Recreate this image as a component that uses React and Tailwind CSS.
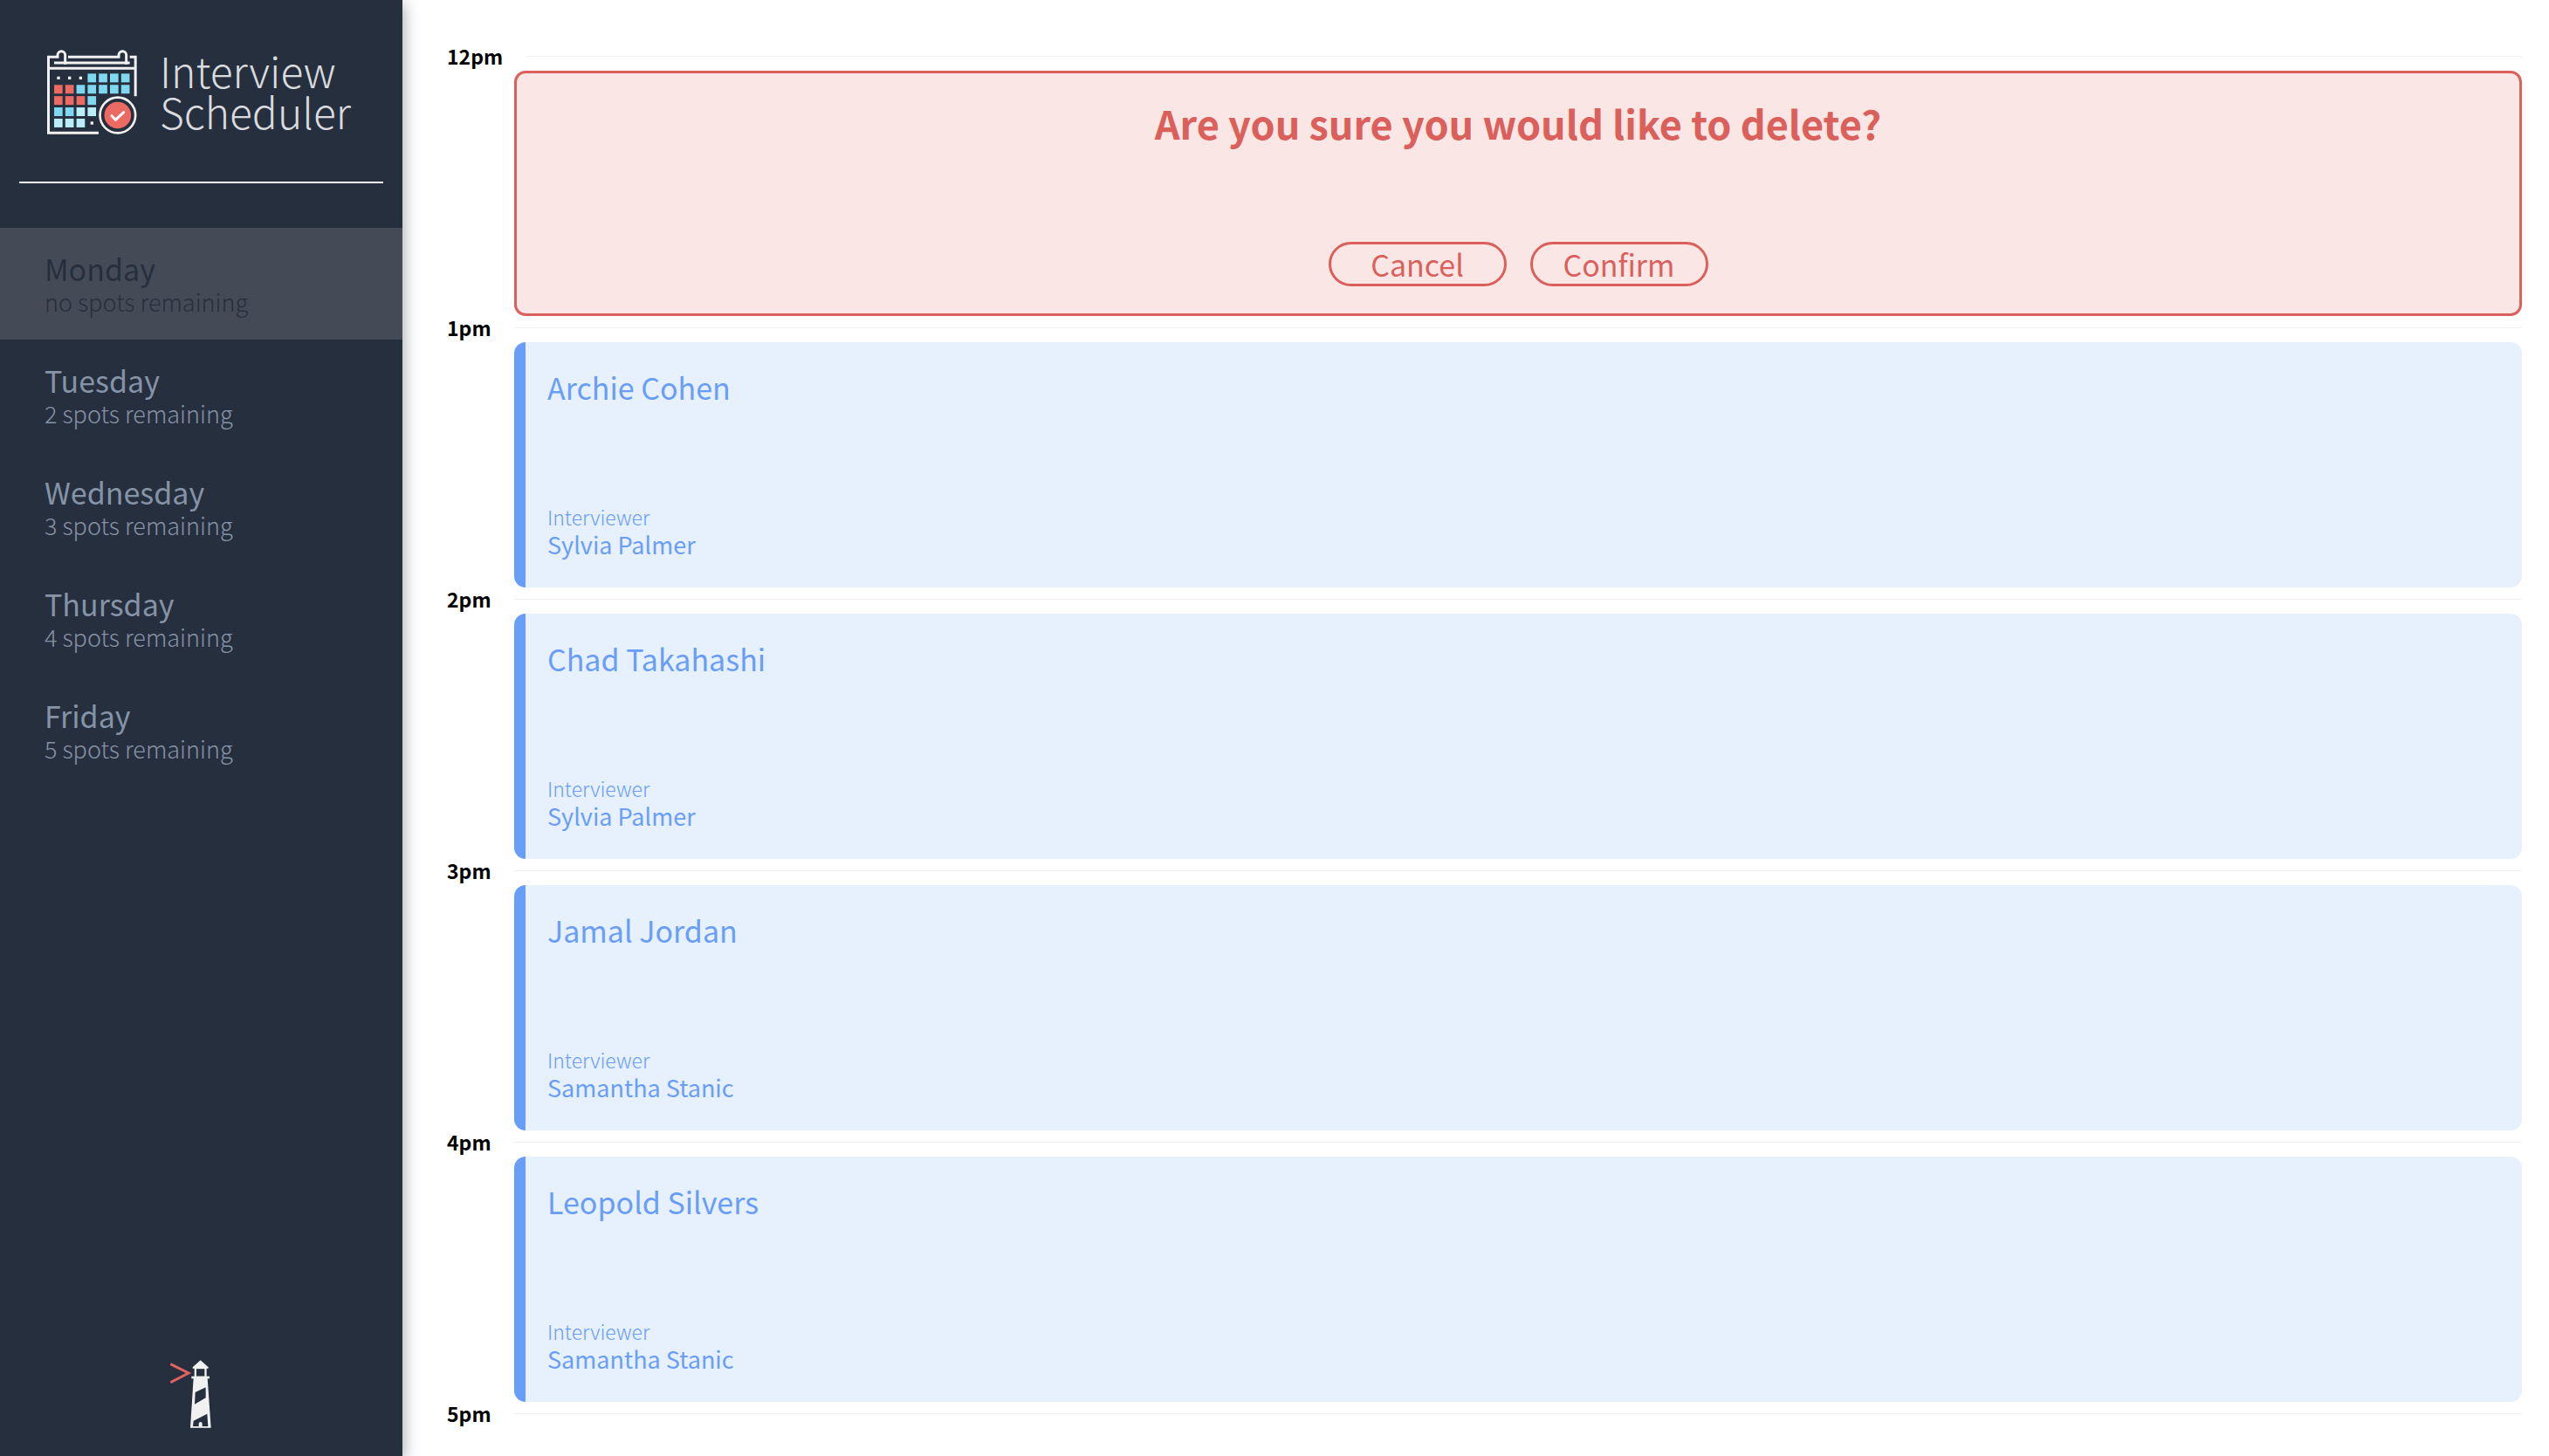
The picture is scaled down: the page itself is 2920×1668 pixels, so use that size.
const DAYS = [
  { name: "Monday", spots: "no spots remaining", full: true },
  { name: "Tuesday", spots: "2 spots remaining" },
  { name: "Wednesday", spots: "3 spots remaining" },
  { name: "Thursday", spots: "4 spots remaining" },
  { name: "Friday", spots: "5 spots remaining" },
];

const APPOINTMENTS = [
  { time: "12pm", confirm: "Are you sure you would like to delete?" },
  { time: "1pm", student: "Archie Cohen", interviewer: "Sylvia Palmer" },
  { time: "2pm", student: "Chad Takahashi", interviewer: "Sylvia Palmer" },
  { time: "3pm", student: "Jamal Jordan", interviewer: "Samantha Stanic" },
  { time: "4pm", student: "Leopold Silvers", interviewer: "Samantha Stanic" },
  { time: "5pm" },
];

const BLUE = "#7fd8ef";
const PALE = "#b9eef9";
const RED = "#ec6a62";

// [column, row, colour] of every filled day in the calendar
const CELLS = [
  [3, 0, BLUE], [4, 0, BLUE], [5, 0, BLUE], [6, 0, BLUE],
  [0, 1, RED], [1, 1, RED], [2, 1, BLUE], [3, 1, BLUE], [4, 1, BLUE], [5, 1, BLUE], [6, 1, BLUE],
  [0, 2, RED], [1, 2, RED], [2, 2, RED], [3, 2, BLUE],
  [0, 3, BLUE], [1, 3, BLUE], [2, 3, PALE], [3, 3, PALE],
  [0, 4, PALE], [1, 4, PALE], [2, 4, PALE],
];

function CalendarIcon() {
  return (
    <svg viewBox="42 51 309 291" className="h-[97px] w-[103px] shrink-0" fill="none" aria-hidden="true">
      <g stroke="#f1f1f1" strokeWidth="9">
        <path d="M104 101V69a13 13 0 0 0-26 0v7H46.5V336.500H219" />
        <path d="M114 76H288V69a13 13 0 0 1 26 0v32" />
        <path d="M66 96H326" />
        <path d="M42 114.500H346" />
        <path d="M326 76H345.500V211" />
      </g>
      {CELLS.map(([c, r, fill]) => (
        <rect key={`${c}-${r}`} x={66 + c * 38.400} y={133 + r * 38.700} width="29" height="30" fill={fill} />
      ))}
      <g fill="#f1f1f1">
        <rect x="76" y="143" width="10" height="10" />
        <rect x="114" y="143" width="10" height="10" />
        <rect x="152" y="143" width="10" height="10" />
        <rect x="191" y="298" width="10" height="10" />
      </g>
      <circle cx="284.500" cy="276" r="61" stroke="#f1f1f1" strokeWidth="8" />
      <circle cx="284.500" cy="276" r="46" fill={RED} />
      <path d="M264 278L277 292L305 266" stroke="#fff" strokeWidth="9" strokeLinecap="round" strokeLinejoin="round" />
    </svg>
  );
}

function LighthouseIcon() {
  return (
    <svg viewBox="45 55 141 234" className="h-[78px] w-[47px]" fill="none" role="img" aria-label="Lighthouse Labs">
      <path d="M46 69L108 100L46 132" stroke="#e0635f" strokeWidth="9" />
      <path d="M149 56L176 80V84H122V80Z" fill="#f1f1f1" />
      <rect x="131.500" y="82" width="35" height="33" stroke="#f1f1f1" strokeWidth="7" />
      <rect x="118" y="111" width="62" height="8" fill="#f1f1f1" />
      <path d="M125 118H173L185 288H114Z" fill="#f1f1f1" />
      <path d="M131 166L167 149V185L129 207Z" fill="#262f3e" />
      <path d="M125 264L172 240L175 283H155V274a6 6 0 0 0-12 0V283H123Z" fill="#262f3e" />
    </svg>
  );
}

function Sidebar() {
  return (
    <aside className="sticky top-0 z-10 flex h-screen w-[461px] shrink-0 flex-col bg-[#262f3e] shadow-[2px_4px_16px_rgba(38,47,62,0.4)]">
      <div className="flex gap-[26px] pt-[57px] pl-[54px]">
        <CalendarIcon />
        <h1 className="text-[48px] leading-[47px] font-light text-[#d9dbdf]">
          Interview
          <br />
          Scheduler
        </h1>
      </div>
      <hr className="mx-[22px] mt-[54px] mb-[51px] border-t-2 border-[#f8f8f8]" />
      <nav>
        <ul>
          {DAYS.map((day) => (
            <li key={day.name}>
              <a
                href="#"
                className={`block px-[51px] pt-[27px] pb-[25px] ${day.full ? "bg-[#454b56] text-[#262f3e]" : "text-[#8593a6]"}`}
              >
                <h2 className="text-[34px] leading-[40px] font-normal">{day.name}</h2>
                <h3 className="text-[27px] leading-[36px] font-light">{day.spots}</h3>
              </a>
            </li>
          ))}
        </ul>
      </nav>
      <div className="mt-auto flex justify-center pr-6 pb-8">
        <LighthouseIcon />
      </div>
    </aside>
  );
}

function DeleteCard({ message }) {
  return (
    <section className="ml-[77px] flex min-h-[281px] flex-col items-center justify-between rounded-[13px] border-3 border-[#db5f5b] bg-[#fae7e5] pt-[29px] pb-[31px] text-[#db5f5b]">
      <h2 className="text-[45px] leading-[56px] font-bold">{message}</h2>
      <div className="flex gap-[27px]">
        {["Cancel", "Confirm"].map((label) => (
          <button
            key={label}
            type="button"
            className="h-[51px] w-[204px] rounded-full border-3 border-[#db5f5b] text-[34px] leading-[45px]"
          >
            {label}
          </button>
        ))}
      </div>
    </section>
  );
}

function InterviewCard({ student, interviewer }) {
  return (
    <section className="ml-[77px] flex min-h-[281px] flex-col justify-between rounded-[13px] border-l-13 border-[#699ef8] bg-[#e7f0fd] pt-[30px] pb-[33px] pl-[25px] text-[#699ef8]">
      <h2 className="text-[34px] leading-[44px]">{student}</h2>
      <div>
        <h4 className="text-[23px] leading-[32px] font-light">Interviewer</h4>
        <h3 className="text-[27px] leading-[32px]">{interviewer}</h3>
      </div>
    </section>
  );
}

export default function App() {
  return (
    <div className="flex h-screen overflow-hidden bg-white font-['Source_Sans_Pro','Noto_Sans_CJK_SC',sans-serif] text-black">
      <Sidebar />
      <main className="min-w-0 flex-1 pt-[51px] pr-[31px] pl-[51px]">
        {APPOINTMENTS.map((item) => (
          <article key={item.time}>
            <header className="mb-1 flex items-center gap-[26px]">
              <h4 className="text-[23px] leading-[26px] font-bold">{item.time}</h4>
              <hr className="flex-1 border-t border-[#f0f0f0]" />
            </header>
            {item.confirm && <DeleteCard message={item.confirm} />}
            {item.student && <InterviewCard student={item.student} interviewer={item.interviewer} />}
          </article>
        ))}
      </main>
    </div>
  );
}
